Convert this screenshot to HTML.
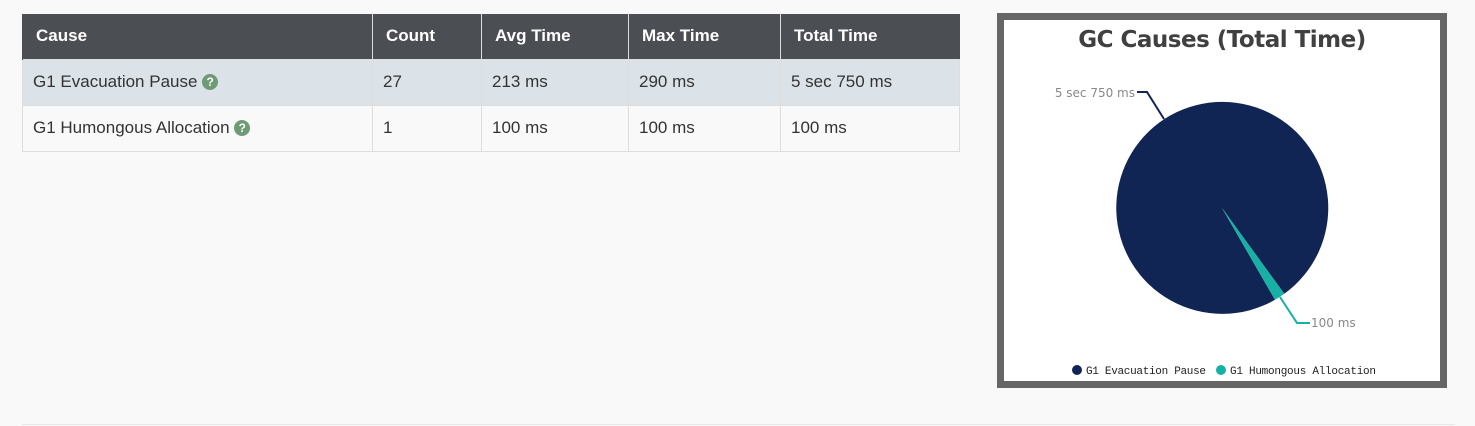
<!DOCTYPE html>
<html><head><meta charset="utf-8"><style>
html,body{margin:0;padding:0;background:#f9f9f9;width:1475px;height:426px;overflow:hidden;font-family:"Liberation Sans",Arial,sans-serif}
table{position:absolute;left:22px;top:14px;border-collapse:collapse;width:937px;table-layout:fixed;font-size:17px;color:#333}
th{background:#4b4e53;color:#fff;text-align:left;font-weight:bold;height:45px;padding:0 0 0 13px;border-left:1px solid #ddd;font-size:17px;box-sizing:border-box}
th:first-child{border-left:1px solid #4b4e53}
td{height:46px;padding:0 0 0 10px;border:1px solid #ddd;box-sizing:border-box;white-space:nowrap}
tr.a td{background:#dbe3e8}
tr.b td{background:#f9f9f9}
.q{display:inline-block;width:16px;height:16px;border-radius:50%;background:#6e9b74;color:#fff;font-size:12px;font-weight:bold;text-align:center;line-height:16px;vertical-align:1px}
.chart{position:absolute;left:997px;top:13px;width:436px;height:361px;border:7px solid #666;background:#fff}
.line{position:absolute;left:22px;top:424px;width:1433px;height:1px;background:#e6e6e6}
</style></head><body>
<table>
<colgroup><col style="width:350px"><col style="width:109px"><col style="width:147px"><col style="width:152px"><col style="width:179px"></colgroup>
<tr><th>Cause</th><th>Count</th><th>Avg Time</th><th>Max Time</th><th>Total Time</th></tr>
<tr class="a"><td>G1 Evacuation Pause <span class="q">?</span></td><td>27</td><td>213 ms</td><td>290 ms</td><td>5 sec 750 ms</td></tr>
<tr class="b"><td>G1 Humongous Allocation <span class="q">?</span></td><td>1</td><td>100 ms</td><td>100 ms</td><td>100 ms</td></tr>
</table>
<div class="chart">
<svg width="436" height="361" viewBox="1004 20 436 361" xmlns="http://www.w3.org/2000/svg">
<text x="1222" y="47" text-anchor="middle" font-family="DejaVu Sans, sans-serif" font-weight="bold" font-size="23" fill="#404040" letter-spacing="-0.5">GC Causes (Total Time)</text>
<path d="M1222 208 L1275 299.8 A106 106 0 1 1 1284.3 293.8 Z" fill="#112554"/>
<path d="M1222 208 L1284.3 293.8 A106 106 0 0 1 1275 299.8 Z" fill="#17b0a5"/>
<polyline points="1164,119 1147,92 1137,92" fill="none" stroke="#112554" stroke-width="2"/>
<text x="1135" y="97" text-anchor="end" font-family="DejaVu Sans, sans-serif" font-size="12" fill="#888">5 sec 750 ms</text>
<polyline points="1280,297 1297,323 1310,323" fill="none" stroke="#17b0a5" stroke-width="2"/>
<text x="1311" y="327" font-family="DejaVu Sans, sans-serif" font-size="12" fill="#888">100 ms</text>
<circle cx="1077" cy="370" r="5" fill="#112554"/>
<text x="1086" y="374" font-family="Liberation Mono, monospace" font-size="11" fill="#222" textLength="120">G1 Evacuation Pause</text>
<circle cx="1221" cy="370" r="5" fill="#17b0a5"/>
<text x="1230" y="374" font-family="Liberation Mono, monospace" font-size="11" fill="#222" textLength="146">G1 Humongous Allocation</text>
</svg>
</div>
<div class="line"></div>
</body></html>
